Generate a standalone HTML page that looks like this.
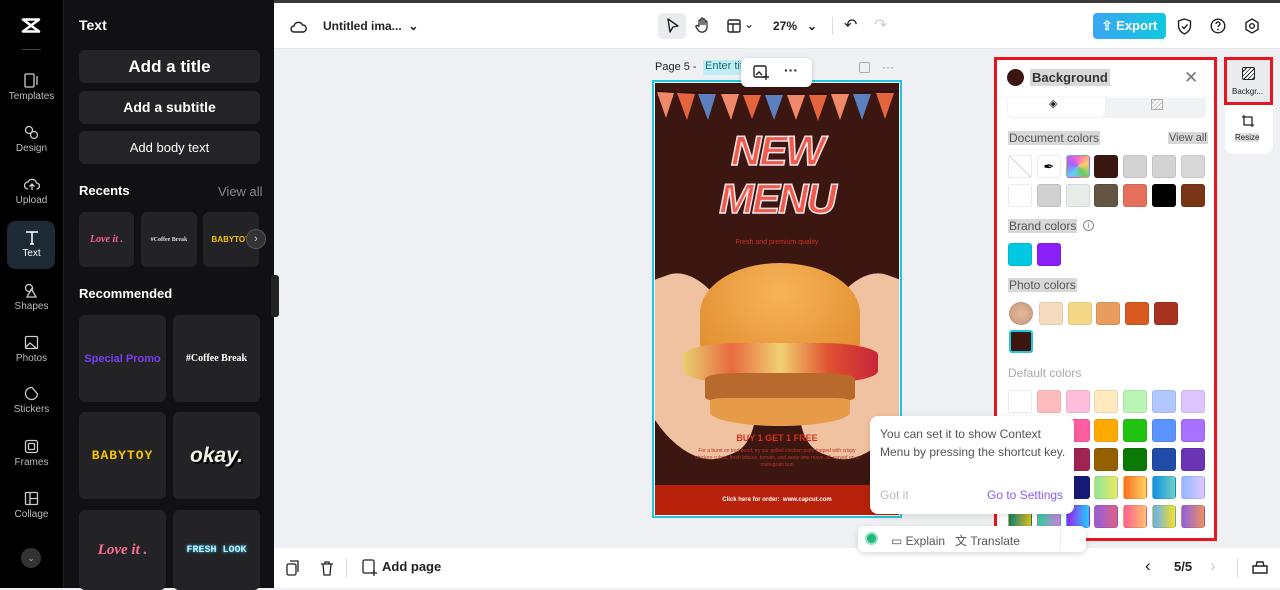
<!DOCTYPE html>
<html><head><meta charset="utf-8">
<style>
*{box-sizing:border-box;margin:0;padding:0}
body{width:1280px;height:588px;overflow:hidden;font-family:"Liberation Sans",sans-serif;background:#eef0f3;position:relative}
.abs{position:absolute}
#nav{left:0;top:0;width:63px;height:588px;background:#000}
#panel{left:63px;top:0;width:211px;height:588px;background:#111113;border-left:1px solid #222}
.ni{position:absolute;left:0;width:63px;text-align:center;color:#bbb;font-size:10px}
.ni svg{display:block;margin:0 auto 3px}
.btn{position:absolute;left:15px;width:181px;background:#242427;border-radius:6px;color:#fff;text-align:center;font-weight:bold}
.card{position:absolute;background:#232326;border-radius:6px;display:flex;align-items:center;justify-content:center;font-weight:bold}
#top{left:274px;top:3px;width:1006px;height:46px;background:#fff;border-bottom:1px solid #e8e8e8}
#bot{left:274px;top:548px;width:1006px;height:40px;background:#fff}
.sw{position:absolute;width:24px;height:23px;border-radius:3px;border:1px solid rgba(0,0,0,.08)}
.lbl{position:absolute;font-size:12px;color:#555;background:#d8d8d8;padding:0 1px}
</style></head><body>
<div class="abs" style="left:0;top:0;width:1280px;height:3px;background:#3a3a3a"></div>
<div id="nav" class="abs">
  <svg class="abs" style="left:20px;top:17px" width="22" height="17" viewBox="0 0 22 17"><path d="M3 2.5h16L11 8.5zM3 14.5h16L11 8.5z" stroke="#fff" stroke-width="2.6" fill="none" stroke-linejoin="round"/></svg>
  <div class="abs" style="left:22px;top:49px;width:19px;height:1px;background:#444"></div>
  <div class="ni" style="top:73px"><svg width="15" height="15" viewBox="0 0 15 15"><rect x="1" y="1" width="9" height="13" rx="1" stroke="#ccc" fill="none" stroke-width="1.3"/><path d="M13 3v9" stroke="#ccc" stroke-width="1.3"/></svg>Templates</div>
  <div class="ni" style="top:125px"><svg width="15" height="15" viewBox="0 0 15 15"><circle cx="5" cy="5" r="3.5" stroke="#ccc" fill="none" stroke-width="1.3"/><circle cx="10" cy="10" r="3.5" stroke="#ccc" fill="none" stroke-width="1.3"/></svg>Design</div>
  <div class="ni" style="top:177px"><svg width="16" height="15" viewBox="0 0 16 15"><path d="M4 12a3.5 3.5 0 010-7 4.5 4.5 0 018.5 1 3 3 0 010 6M8 13V7M5.5 9.5L8 7l2.5 2.5" stroke="#ccc" fill="none" stroke-width="1.3"/></svg>Upload</div>
  <div class="abs" style="left:7px;top:221px;width:48px;height:48px;background:#1d2a36;border-radius:8px"></div>
  <div class="ni" style="top:229px;color:#fff"><svg width="16" height="16" viewBox="0 0 16 16"><path d="M2 3h12M8 3v12M6 15h4" stroke="#fff" fill="none" stroke-width="1.5"/></svg>Text</div>
  <div class="ni" style="top:283px"><svg width="15" height="15" viewBox="0 0 15 15"><path d="M7.5 6L3 14h9z" stroke="#ccc" fill="none" stroke-width="1.3"/><circle cx="5" cy="5" r="3.5" stroke="#ccc" fill="none" stroke-width="1.3"/></svg>Shapes</div>
  <div class="ni" style="top:335px"><svg width="15" height="15" viewBox="0 0 15 15"><rect x="1.5" y="1.5" width="12" height="12" rx="1" stroke="#ccc" fill="none" stroke-width="1.3"/><path d="M2 12l4-4 6 5" stroke="#ccc" fill="none" stroke-width="1.3"/></svg>Photos</div>
  <div class="ni" style="top:386px"><svg width="15" height="15" viewBox="0 0 15 15"><path d="M13.5 8A6 6 0 118 1.5L13.5 8z" stroke="#ccc" fill="none" stroke-width="1.3"/></svg>Stickers</div>
  <div class="ni" style="top:439px"><svg width="15" height="15" viewBox="0 0 15 15"><rect x="1.5" y="1.5" width="12" height="12" rx="2" stroke="#ccc" fill="none" stroke-width="1.3"/><rect x="4.5" y="4.5" width="6" height="6" rx="1" stroke="#ccc" fill="none" stroke-width="1.3"/></svg>Frames</div>
  <div class="ni" style="top:491px"><svg width="15" height="15" viewBox="0 0 15 15"><rect x="1.5" y="1.5" width="12" height="12" rx="1" stroke="#ccc" fill="none" stroke-width="1.3"/><path d="M6 1.5v12M6 7.5h7.5" stroke="#ccc" stroke-width="1.3"/></svg>Collage</div>
  <div class="abs" style="left:21px;top:548px;width:20px;height:20px;border-radius:50%;background:#333;color:#aaa;font-size:9px;text-align:center;line-height:20px">⌄</div>
</div>
<div id="panel" class="abs">
  <div class="abs" style="left:15px;top:17px;color:#fff;font-weight:bold;font-size:14px">Text</div>
  <div class="btn" style="top:50px;height:33px;line-height:33px;font-size:17px">Add a title</div>
  <div class="btn" style="top:91px;height:33px;line-height:33px;font-size:14px">Add a subtitle</div>
  <div class="btn" style="top:131px;height:33px;line-height:33px;font-size:13px;font-weight:normal">Add body text</div>
  <div class="abs" style="left:15px;top:183px;color:#fff;font-weight:bold;font-size:13px">Recents</div>
  <div class="abs" style="left:154px;top:184px;color:#888;font-size:13px">View all</div>
  <div class="card" style="left:15px;top:212px;width:55px;height:55px;color:#ff5f8f;font-family:'Liberation Serif';font-style:italic;font-size:10px">Love it .</div>
  <div class="card" style="left:77px;top:212px;width:56px;height:55px;color:#ddd;font-size:6px;font-family:'Liberation Serif'">#Coffee Break</div>
  <div class="card" style="left:139px;top:212px;width:56px;height:55px;color:#f5c400;font-size:8px;overflow:hidden">BABYTOY</div>
  <div class="abs" style="left:182px;top:229px;width:20px;height:20px;border-radius:50%;background:#333;border:1px solid #555;color:#ccc;font-size:11px;text-align:center;line-height:18px">›</div>
  <div class="abs" style="left:15px;top:286px;color:#fff;font-weight:bold;font-size:13px">Recommended</div>
  <div class="card" style="left:15px;top:315px;width:87px;height:87px;color:#7a3df0;font-size:11px">Special Promo</div>
  <div class="card" style="left:109px;top:315px;width:87px;height:87px;color:#fff;font-size:10px;font-family:'Liberation Serif'">#Coffee Break</div>
  <div class="card" style="left:15px;top:412px;width:87px;height:87px;color:#f5c400;font-size:13px;letter-spacing:1px;font-family:'Liberation Mono'">BABYTOY</div>
  <div class="card" style="left:109px;top:412px;width:87px;height:87px;color:#f5f0e6;font-size:21px;font-style:italic;text-shadow:2px 2px 0 #000">okay.</div>
  <div class="card" style="left:15px;top:510px;width:87px;height:80px;color:#ff6f91;font-size:15px;font-style:italic;font-family:'Liberation Serif'">Love it .</div>
  <div class="card" style="left:109px;top:510px;width:87px;height:80px;color:#bff2ff;font-size:10px;font-family:'Liberation Mono';text-shadow:0 0 3px #3cf">FRESH LOOK</div>
</div>
<div class="abs" style="left:271px;top:275px;width:8px;height:42px;background:#222;border-radius:3px"></div>

<div id="top" class="abs">
  <svg class="abs" style="left:16px;top:16px" width="17" height="15" viewBox="0 0 17 15"><path d="M4 13a3 3 0 010-6 4.5 4.5 0 018.5-1A3.5 3.5 0 0113 13z" stroke="#222" fill="none" stroke-width="1.4"/></svg>
  <div class="abs" style="left:49px;top:16px;font-size:12px;color:#222;font-weight:bold">Untitled ima... &nbsp;⌄</div>
  <div class="abs" style="left:384px;top:10px;width:28px;height:26px;background:#e9ebee;border-radius:5px"></div>
  <svg class="abs" style="left:392px;top:15px" width="14" height="16" viewBox="0 0 14 16"><path d="M2 1l10 7-5 1-3 5z" stroke="#222" fill="none" stroke-width="1.4" stroke-linejoin="round"/></svg>
  <svg class="abs" style="left:421px;top:14px" width="16" height="17" viewBox="0 0 16 17"><path d="M4 9V4a1 1 0 012 0v4V2a1 1 0 012 0v6V3a1 1 0 012 0v5V5a1 1 0 012 0v6a5 5 0 01-9 2l-2-3a1 1 0 012-1z" stroke="#222" fill="none" stroke-width="1.2"/></svg>
  <svg class="abs" style="left:453px;top:16px" width="14" height="14" viewBox="0 0 14 14"><rect x="1" y="1" width="12" height="12" rx="1.5" stroke="#222" fill="none" stroke-width="1.4"/><path d="M1 5h12M6 5v8" stroke="#222" stroke-width="1.4"/></svg>
  <div class="abs" style="left:470px;top:14px;font-size:12px;color:#222">⌄</div>
  <div class="abs" style="left:499px;top:16px;font-size:12px;color:#222;font-weight:bold">27% &nbsp;&nbsp;⌄</div>
  <div class="abs" style="left:558px;top:14px;width:1px;height:18px;background:#ddd"></div>
  <div class="abs" style="left:570px;top:12px;font-size:16px;color:#222">↶</div>
  <div class="abs" style="left:600px;top:12px;font-size:16px;color:#ccc">↷</div>
  <div class="abs" style="left:819px;top:10px;width:73px;height:26px;background:linear-gradient(90deg,#3aa6f2,#10c8e0);border-radius:4px;color:#fff;font-size:13px;font-weight:bold;line-height:26px;text-align:center">⇪ Export</div>
  <svg class="abs" style="left:903px;top:15px" width="15" height="17" viewBox="0 0 15 17"><path d="M7.5 1L13.5 3v5c0 4-3 6.5-6 8-3-1.5-6-4-6-8V3z M5 8.5l2 2 3.5-4" stroke="#222" fill="none" stroke-width="1.4"/></svg>
  <svg class="abs" style="left:936px;top:15px" width="16" height="16" viewBox="0 0 16 16"><circle cx="8" cy="8" r="6.8" stroke="#222" fill="none" stroke-width="1.4"/><path d="M6 6a2 2 0 114 0c0 1.5-2 1.5-2 3" stroke="#222" fill="none" stroke-width="1.4"/><circle cx="8" cy="11.5" r=".9" fill="#222"/></svg>
  <svg class="abs" style="left:970px;top:15px" width="16" height="16" viewBox="0 0 16 16"><path d="M8 1l6 3.5v7L8 15l-6-3.5v-7z" stroke="#222" fill="none" stroke-width="1.4"/><circle cx="8" cy="8" r="2.3" stroke="#222" fill="none" stroke-width="1.4"/></svg>
</div>

<!-- canvas header -->
<div class="abs" style="left:655px;top:61px;font-size:11px;color:#222">Page 5 -</div>
<div class="abs" style="left:703px;top:60px;width:40px;height:15px;background:#bfeef5;font-size:11px;color:#1a6a80;padding-left:2px;overflow:hidden;white-space:nowrap">Enter title</div>
<div class="abs" style="left:859px;top:62px;width:11px;height:11px;border:1px solid #aaa;border-radius:2px"></div>
<div class="abs" style="left:882px;top:60px;font-size:12px;color:#888">···</div>

<!-- poster -->
<div class="abs" style="left:652px;top:80px;width:250px;height:438px;border:2px solid #1fc8e0"></div>
<div class="abs" style="left:655px;top:83px;width:244px;height:432px;background:#3c1610;overflow:hidden">
  <svg class="abs" style="left:0;top:0" width="244" height="50" viewBox="0 0 244 50">
    <path d="M0 8Q122 14 244 8" stroke="#2a0c08" fill="none"/>
    <g>
      <path d="M2 9l17 1-8 25z" fill="#f0896a"/><path d="M22 10l18 1-8 26z" fill="#e4643e"/><path d="M43 11l18 0-8 26z" fill="#5b7fbf"/><path d="M66 11l18 0-8 26z" fill="#f0896a"/><path d="M88 12l18 0-9 24z" fill="#e4643e"/><path d="M110 12l18 0-9 25z" fill="#5b7fbf"/><path d="M132 12l18 0-9 25z" fill="#f0896a"/><path d="M154 12l18 0-9 26z" fill="#e4643e"/><path d="M176 11l18 0-9 26z" fill="#f0896a"/><path d="M198 11l18 0-9 26z" fill="#5b7fbf"/><path d="M221 10l18 0-9 26z" fill="#e4643e"/>
    </g>
  </svg>
  <div class="abs" style="left:0;top:44px;width:244px;text-align:center;font-family:'Liberation Sans';font-weight:bold;font-style:italic;font-size:42px;letter-spacing:-2px;color:#ef5a4a;-webkit-text-stroke:1.5px #f3e4ea;line-height:48px">NEW<br>MENU</div>
  <div class="abs" style="left:0;top:156px;width:244px;text-align:center;font-size:7px;color:#c83020">Fresh and premium quality</div>
  <!-- hands -->
  <div class="abs" style="left:-20px;top:190px;width:110px;height:190px;background:#f1c2a2;border-radius:50% 40% 40% 50%;transform:rotate(-20deg)"></div>
  <div class="abs" style="left:155px;top:190px;width:110px;height:190px;background:#f1c2a2;border-radius:40% 50% 50% 40%;transform:rotate(20deg)"></div>
  <!-- burger -->
  <div class="abs" style="left:45px;top:180px;width:160px;height:100px;background:radial-gradient(ellipse at 50% 30%,#f6b458,#e08a2c);border-radius:50% 50% 20% 20%"></div>
  <div class="abs" style="left:28px;top:260px;width:195px;height:40px;background:linear-gradient(90deg,#e8d070,#e86a40,#f0d070,#e05030,#c8243a);border-radius:30%"></div>
  <div class="abs" style="left:50px;top:290px;width:150px;height:30px;background:#b86a2c;border-radius:20%"></div>
  <div class="abs" style="left:55px;top:315px;width:140px;height:28px;background:#e79a48;border-radius:10% 10% 50% 50%"></div>
  <div class="abs" style="left:0;top:350px;width:244px;text-align:center;font-size:9px;font-weight:bold;color:#d8321c">BUY 1 GET 1 FREE</div>
  <div class="abs" style="left:40px;top:365px;width:164px;text-align:center;font-size:5px;line-height:7px;color:#b83828">For a burst on trad bond, try our grilled chicken patty topped with crispy chicken cubes, fresh lettuce, tomato, and zesty lime mayo, all served on a multi-grain bun</div>
  <div class="abs" style="left:0;top:402px;width:244px;height:30px;background:#b8210a;color:#fff;font-size:6px;font-weight:bold;text-align:center;line-height:30px">Click here for order: &nbsp;www.capcut.com</div>
</div>
<div class="abs" style="left:741px;top:58px;width:71px;height:29px;background:#fff;border-radius:6px;box-shadow:0 1px 4px rgba(0,0,0,.2)"></div>
<svg class="abs" style="left:753px;top:65px" width="16" height="15" viewBox="0 0 16 15"><rect x="1" y="1" width="12" height="11" rx="1.5" stroke="#222" fill="none" stroke-width="1.4"/><path d="M3 10l3-3 3 3M13 9v6M10 12h6" stroke="#222" stroke-width="1.4" fill="none"/></svg>
<div class="abs" style="left:784px;top:62px;font-size:14px;color:#222;font-weight:bold">···</div>

<!-- color panel -->
<div class="abs" style="left:994px;top:57px;width:223px;height:484px;border:3px solid #e8141e;background:#fff"></div>
<div class="abs" style="left:997px;top:60px;width:217px;height:36px;background:#fff;box-shadow:0 2px 3px rgba(0,0,0,.04)"></div>
<div class="abs" style="left:1007px;top:69px;width:17px;height:17px;border-radius:50%;background:#3c1610"></div>
<div class="abs" style="left:1030px;top:69px;background:#d8d8d8;font-size:13px;font-weight:bold;color:#333;padding:1px 2px">Background</div>
<div class="abs" style="left:1184px;top:68px;font-size:17px;color:#777">✕</div>
<div class="abs" style="left:1007px;top:98px;width:199px;height:20px;background:#f1f2f4;border-radius:0 0 6px 6px"></div>
<div class="abs" style="left:1008px;top:98px;width:97px;height:19px;background:#fff;border-radius:0 0 6px 6px"></div>
<div class="abs" style="left:1049px;top:97px;font-size:11px;color:#222">◈</div>
<div class="abs" style="left:1151px;top:99px;width:12px;height:11px;border:1px solid #aaa;background:repeating-linear-gradient(135deg,#fff 0 2px,#bbb 2px 3px)"></div>
<div class="lbl" style="left:1008px;top:131px">Document colors</div>
<div class="lbl" style="left:1168px;top:132px;font-size:11px">View all</div>
<div class="sw" style="left:1008px;top:155px;background:linear-gradient(45deg,#fff 48%,#bbb 50%,#fff 52%)"></div>
<div class="sw" style="left:1037px;top:155px;background:#fff;font-size:13px;text-align:center;line-height:22px">✒</div>
<div class="sw" style="left:1066px;top:155px;background:conic-gradient(#f6c,#fc6,#6c6,#6cf,#96f,#f6c)"></div>
<div class="sw" style="left:1094px;top:155px;background:#3c1610"></div>
<div class="sw" style="left:1123px;top:155px;background:#d4d3d3"></div>
<div class="sw" style="left:1152px;top:155px;background:#d4d3d3"></div>
<div class="sw" style="left:1181px;top:155px;background:#d9d8d8"></div>
<div class="sw" style="left:1008px;top:184px;background:#fff"></div>
<div class="sw" style="left:1037px;top:184px;background:#d0d0d0"></div>
<div class="sw" style="left:1066px;top:184px;background:#e6ece8"></div>
<div class="sw" style="left:1094px;top:184px;background:#635444"></div>
<div class="sw" style="left:1123px;top:184px;background:#e4705c"></div>
<div class="sw" style="left:1152px;top:184px;background:#000"></div>
<div class="sw" style="left:1181px;top:184px;background:#7a3614"></div>
<div class="lbl" style="left:1008px;top:219px">Brand colors</div>
<div class="abs" style="left:1083px;top:220px;width:11px;height:11px;border:1px solid #888;border-radius:50%;font-size:8px;text-align:center;line-height:9px;color:#888">i</div>
<div class="sw" style="left:1008px;top:243px;background:#00c8e0"></div>
<div class="sw" style="left:1037px;top:243px;background:#8a20f5"></div>
<div class="lbl" style="left:1008px;top:278px">Photo colors</div>
<div class="sw" style="left:1009px;top:302px;border-radius:50%;background:radial-gradient(#e8b89a,#c69a80)"></div>
<div class="sw" style="left:1039px;top:302px;background:#f6dac0"></div>
<div class="sw" style="left:1068px;top:302px;background:#f4d888"></div>
<div class="sw" style="left:1096px;top:302px;background:#e89c5e"></div>
<div class="sw" style="left:1125px;top:302px;background:#d85a20"></div>
<div class="sw" style="left:1154px;top:302px;background:#a83220"></div>
<div class="sw" style="left:1009px;top:330px;background:#3c1610;border:2px solid #1fc8e0"></div>
<div class="abs" style="left:1008px;top:366px;font-size:12px;color:#aaa">Default colors</div>
<div class="sw" style="left:1008px;top:390px;background:#fff"></div>
<div class="sw" style="left:1037px;top:390px;background:#ffbcbc"></div>
<div class="sw" style="left:1066px;top:390px;background:#ffbedb"></div>
<div class="sw" style="left:1094px;top:390px;background:#ffe9bd"></div>
<div class="sw" style="left:1123px;top:390px;background:#bbf5b5"></div>
<div class="sw" style="left:1152px;top:390px;background:#b0c8ff"></div>
<div class="sw" style="left:1181px;top:390px;background:#dec5ff"></div>
<div class="sw" style="left:1066px;top:419px;background:#ff5fa0"></div>
<div class="sw" style="left:1094px;top:419px;background:#ffaa00"></div>
<div class="sw" style="left:1123px;top:419px;background:#22c414"></div>
<div class="sw" style="left:1152px;top:419px;background:#5c94ff"></div>
<div class="sw" style="left:1181px;top:419px;background:#aa70ff"></div>
<div class="sw" style="left:1066px;top:448px;background:#a02454"></div>
<div class="sw" style="left:1094px;top:448px;background:#946000"></div>
<div class="sw" style="left:1123px;top:448px;background:#0a7a04"></div>
<div class="sw" style="left:1152px;top:448px;background:#204ca8"></div>
<div class="sw" style="left:1181px;top:448px;background:#6a34b4"></div>
<div class="sw" style="left:1066px;top:476px;background:#181a7a"></div>
<div class="sw" style="left:1094px;top:476px;background:linear-gradient(90deg,#8ae89a,#f0e860)"></div>
<div class="sw" style="left:1123px;top:476px;background:linear-gradient(90deg,#ff7020,#ffd060)"></div>
<div class="sw" style="left:1152px;top:476px;background:linear-gradient(90deg,#1090e8,#70d0c0)"></div>
<div class="sw" style="left:1181px;top:476px;background:linear-gradient(90deg,#90b8ff,#e0c8ff)"></div>
<div class="sw" style="left:1008px;top:505px;background:linear-gradient(90deg,#108070,#e0c020)"></div>
<div class="sw" style="left:1037px;top:505px;background:linear-gradient(90deg,#30d0a0,#d080e0)"></div>
<div class="sw" style="left:1066px;top:505px;background:linear-gradient(90deg,#a020f0,#20d0ff)"></div>
<div class="sw" style="left:1094px;top:505px;background:linear-gradient(90deg,#9060e0,#e06080)"></div>
<div class="sw" style="left:1123px;top:505px;background:linear-gradient(90deg,#ff6090,#ffc070)"></div>
<div class="sw" style="left:1152px;top:505px;background:linear-gradient(90deg,#60b0ff,#f8e020)"></div>
<div class="sw" style="left:1181px;top:505px;background:linear-gradient(90deg,#9060e0,#f09060)"></div>

<!-- right rail -->
<div class="abs" style="left:1225px;top:57px;width:48px;height:97px;background:#fff;border-radius:0 0 8px 8px"></div>
<div class="abs" style="left:1224px;top:57px;width:49px;height:48px;border:3px solid #e8141e;background:#e9ebee"></div>
<div class="abs" style="left:1242px;top:67px;width:13px;height:13px;border:1.5px solid #222;border-radius:2px;background:repeating-linear-gradient(135deg,#fff 0 2px,#222 2px 3px)"></div>
<div class="abs" style="left:1232px;top:87px;font-size:8px;color:#222">Backgr...</div>
<svg class="abs" style="left:1241px;top:114px" width="14" height="14" viewBox="0 0 14 14"><path d="M3 1v10h10M1 3h10v10" stroke="#222" fill="none" stroke-width="1.3"/></svg>
<div class="abs" style="left:1235px;top:133px;font-size:8px;color:#222;background:#e0e0e0">Resize</div>

<div id="bot" class="abs">
  <svg class="abs" style="left:12px;top:12px" width="14" height="16" viewBox="0 0 14 16"><rect x="1" y="4" width="9" height="11" rx="1.5" stroke="#222" fill="none" stroke-width="1.3"/><path d="M4 1h8v11" stroke="#222" fill="none" stroke-width="1.3"/></svg>
  <svg class="abs" style="left:46px;top:12px" width="14" height="16" viewBox="0 0 14 16"><path d="M1 4h12M5 4V2h4v2M3 4l1 11h6l1-11" stroke="#222" fill="none" stroke-width="1.3"/></svg>
  <div class="abs" style="left:72px;top:10px;width:1px;height:20px;background:#ddd"></div>
  <svg class="abs" style="left:88px;top:11px" width="16" height="17" viewBox="0 0 16 17"><rect x="1" y="1" width="11" height="13" rx="1.5" stroke="#222" fill="none" stroke-width="1.3"/><path d="M12 11v6M9 14h6" stroke="#222" stroke-width="1.3"/></svg>
  <div class="abs" style="left:108px;top:11px;font-size:13px;font-weight:bold;color:#222">Add page</div>
  <div class="abs" style="left:871px;top:8px;font-size:17px;color:#222">‹</div>
  <div class="abs" style="left:900px;top:11px;font-size:13px;font-weight:bold;color:#222">5/5</div>
  <div class="abs" style="left:936px;top:8px;font-size:17px;color:#ccc">›</div>
  <div class="abs" style="left:963px;top:10px;width:1px;height:20px;background:#ddd"></div>
  <svg class="abs" style="left:978px;top:12px" width="16" height="14" viewBox="0 0 16 14"><path d="M1 6h14v7H1zM4 6l1-4h6l1 4" stroke="#222" fill="none" stroke-width="1.4"/></svg>
</div>

<!-- tooltip (on top) -->
<div class="abs" style="left:870px;top:416px;width:204px;height:98px;background:#fff;border-radius:8px;box-shadow:0 2px 8px rgba(0,0,0,.12)"></div>
<div class="abs" style="left:880px;top:425px;width:190px;font-size:12px;line-height:18px;color:#555">You can set it to show Context Menu by pressing the shortcut key.</div>
<div class="abs" style="left:880px;top:488px;font-size:12px;color:#bbb">Got it</div>
<div class="abs" style="left:987px;top:488px;font-size:12px;color:#8b5cf6">Go to Settings</div>
<div class="abs" style="left:858px;top:526px;width:228px;height:26px;background:#fff;border-radius:6px;box-shadow:0 2px 6px rgba(0,0,0,.15)"></div>
<div class="abs" style="left:1060px;top:528px;width:1px;height:22px;background:#eee"></div>
<div class="abs" style="left:865px;top:532px;width:13px;height:13px;border-radius:50%;background:#1fb87a;border:2px solid #8ee5c0"></div>
<div class="abs" style="left:891px;top:532px;font-size:12px;color:#555">▭ Explain &nbsp;&nbsp;文 Translate</div>
</body></html>
